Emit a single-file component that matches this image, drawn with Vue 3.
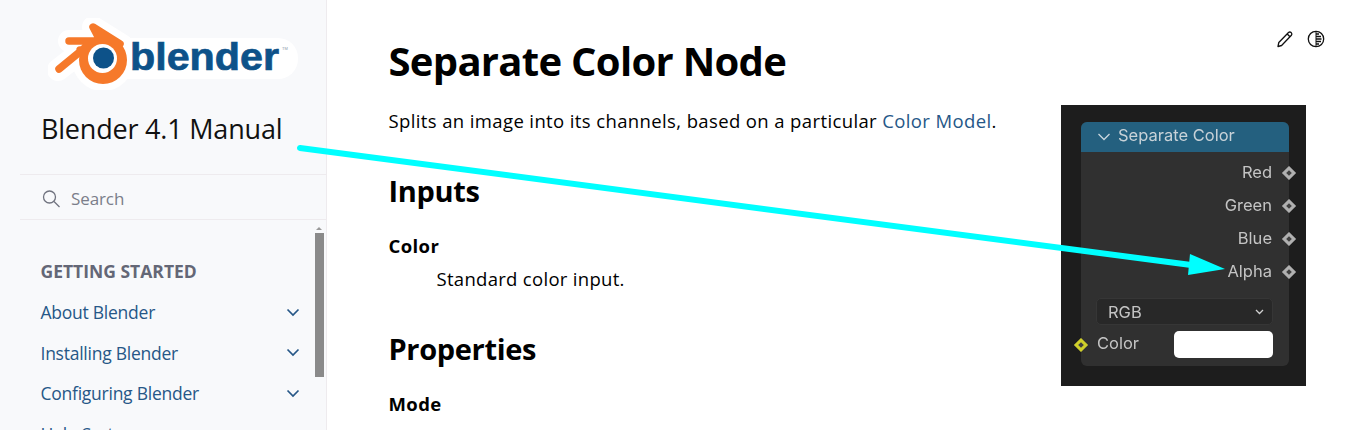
<script setup>
const navItems = ['About Blender', 'Installing Blender', 'Configuring Blender', 'Help System']
const outputs = ['Red', 'Green', 'Blue', 'Alpha']
</script>

<template>
  <div class="page">
    <aside class="sidebar">
      <svg class="logo" width="250" height="72" viewBox="48 18 250 72">
        <g fill="none" stroke="#fff" stroke-linecap="round" stroke-linejoin="round">
          <path d="M93 27 L122 45 M69 41 H105 M58 70 L90 45" stroke-width="22" />
          <circle cx="103" cy="60" r="31" fill="#fff" stroke="none" />
          <rect x="108" y="38" width="190" height="41" rx="20" fill="#fff" stroke="none" />
        </g>
        <circle cx="103" cy="60" r="24" fill="#f6792a" />
        <path d="M93 27 L120 44 L105 50 Z M69 41 H103 V50 H80 M59 69 L87 46" fill="none" stroke="#f6792a" stroke-width="7.5" stroke-linecap="round" stroke-linejoin="round" />
        <circle cx="102.5" cy="58.5" r="14.5" fill="#fff" />
        <circle cx="103.5" cy="58" r="10.5" fill="#0d5289" />
        <text class="logo-word" x="130" y="70" textLength="149" lengthAdjust="spacingAndGlyphs">blender</text>
        <text class="logo-tm" x="282" y="50">TM</text>
      </svg>
      <div class="brand">Blender 4.1 Manual</div>
      <div class="search">
        <svg width="18" height="18" viewBox="0 0 18 18" fill="none" stroke="#70737f" stroke-width="1.3">
          <circle cx="7.5" cy="7" r="6" />
          <path d="M12 11.5 L17.5 17" />
        </svg>
        <span>Search</span>
      </div>
      <nav class="nav">
        <div class="caption">GETTING STARTED</div>
        <a v-for="item in navItems" :key="item" class="nav-row">
          <span>{{ item }}</span>
          <svg width="14" height="9" viewBox="0 0 14 9" fill="none" stroke="#265787" stroke-width="1.7">
            <path d="M1.5 1.5 L7 7 L12.5 1.5" />
          </svg>
        </a>
      </nav>
      <div class="scroll-arrow"></div>
      <div class="scroll-thumb"></div>
    </aside>

    <main class="main">
      <div class="icons">
        <svg width="18" height="18" viewBox="0 0 18 18" fill="none" stroke="#111" stroke-width="1.3" stroke-linejoin="round">
          <path d="M2 16.5 L2.8 12.5 L12.5 2.5 Q13.8 1.4 15.2 2.6 Q16.5 4 15.4 5.3 L5.6 15.5 Z" />
          <path d="M11.2 4 L14 6.8" />
        </svg>
        <svg width="18" height="18" viewBox="0 0 18 18" fill="none" stroke="#111" stroke-width="1.3">
          <circle cx="9" cy="9" r="7.7" />
          <path d="M9 1.3 V16.7" stroke-width="1" />
          <path d="M9 4 H12 M9 6.5 H14 M9 9 H14.5 M9 11.5 H14 M9 14 H12" />
        </svg>
      </div>

      <div class="figure">
        <div class="node">
          <div class="node-head">
            <svg width="14" height="8" viewBox="0 0 14 8" fill="none" stroke="#c9d6de" stroke-width="1.3">
              <path d="M1.5 1 L7 6.5 L12.5 1" />
            </svg>
            <span>Separate Color</span>
          </div>
          <div class="node-outputs">
            <div v-for="o in outputs" :key="o" class="output">
              {{ o }}
              <i class="socket socket-right"></i>
            </div>
          </div>
          <div class="select">
            <span>RGB</span>
            <svg width="9" height="6" viewBox="0 0 9 6" fill="none" stroke="#d0d0d0" stroke-width="1.3">
              <path d="M1 1 L4.5 4.5 L8 1" />
            </svg>
          </div>
          <div class="color-row">
            <i class="socket socket-left"></i>
            <span class="color-label">Color</span>
            <div class="swatch"></div>
          </div>
        </div>
      </div>

      <h1>Separate Color Node</h1>
      <p class="lead">Splits an image into its channels, based on a particular <a>Color Model</a>.</p>
      <h2>Inputs</h2>
      <dl>
        <dt>Color</dt>
        <dd>Standard color input.</dd>
      </dl>
      <h2 class="h2-second">Properties</h2>
      <dl>
        <dt>Mode</dt>
        <dd>The color model to output.</dd>
      </dl>
    </main>

    <svg class="arrow" width="1349" height="430" viewBox="0 0 1349 430">
      <path d="M300 148 L1195 265.5" stroke="#00ffff" stroke-width="6" stroke-linecap="round" fill="none" />
      <path d="M1190 254 L1225 269 L1188 275 Z" fill="#00ffff" />
    </svg>
  </div>
</template>

<style>
html, body { margin: 0; background: #fff; }
</style>

<style scoped>
.page {
  position: relative;
  display: flex;
  width: 1349px;
  height: 430px;
  overflow: hidden;
  font-family: "Open Sans", "Noto Sans", sans-serif;
  color: #000;
}
.sidebar {
  position: relative;
  flex: 0 0 326px;
  box-sizing: content-box;
  height: 430px;
  overflow: hidden;
  background: #f8f9fb;
  border-right: 1px solid #eeebee;
}
.logo { display: block; margin: 18px 0 0 48px; }
.logo-word {
  font-family: "Liberation Sans", sans-serif;
  font-weight: 700;
  font-size: 38px;
  fill: #0d5289;
  stroke: #0d5289;
  stroke-width: 0.7px;
}
.logo-tm {
  font-family: "Liberation Sans", sans-serif;
  font-size: 4px;
  fill: #8a99a8;
}
.brand {
  margin: 19px 0 0 41px;
  height: 65px;
  line-height: 40px;
  font-size: 27px;
  letter-spacing: -0.2px;
  color: #111;
  white-space: nowrap;
}
.search {
  display: flex;
  align-items: center;
  gap: 12px;
  box-sizing: content-box;
  margin-left: 20px;
  padding: 3px 0 0 22px;
  height: 41px;
  border-top: 1px solid #eeebee;
  border-bottom: 1px solid #eeebee;
  color: #7b7e8a;
  font-size: 17px;
  letter-spacing: -0.1px;
}
.search span { margin-left: -1px; }
.nav { padding: 39px 0 0 40.5px; }
.caption {
  font-size: 17.5px;
  font-weight: 700;
  line-height: 24px;
  color: #646776;
  margin-bottom: 9px;
}
.nav-row {
  display: flex;
  align-items: center;
  justify-content: space-between;
  width: 259.5px;
  height: 40.5px;
  font-size: 17.5px;
  letter-spacing: -0.25px;
  color: #265787;
}
.scroll-arrow {
  position: absolute;
  left: 316px;
  top: 227px;
  border-left: 3px solid transparent;
  border-right: 3px solid transparent;
  border-bottom: 3px solid #9a9a9a;
}
.scroll-thumb {
  position: absolute;
  left: 315px;
  top: 233px;
  width: 9px;
  height: 144px;
  background: #8a8a8a;
}

.main {
  flex: 1;
  box-sizing: border-box;
  padding: 0 43px 0 61.5px;
  min-width: 0;
}
.icons {
  float: right;
  display: flex;
  gap: 13px;
  margin: 30px -19px 0 0;
}
.figure {
  float: right;
  clear: right;
  box-sizing: border-box;
  width: 245px;
  height: 281px;
  margin: 57px 0 0 30px;
  padding: 17px 17px 0 20px;
  background: #1d1d1d;
  font-family: Inter, "Open Sans", sans-serif;
  font-size: 16.5px;
  color: #c4c4c4;
  filter: blur(0.35px);
}
.node {
  box-sizing: border-box;
  width: 208px;
  height: 244px;
  border-radius: 6px;
  background: #303030;
}
.node-head {
  display: flex;
  align-items: center;
  gap: 7px;
  height: 29px;
  padding: 0 0 1px 16px;
  line-height: 24px;
  background: #24607f;
  border-radius: 6px 6px 0 0;
  color: #c8d2d8;
}
.node-head span { margin-top: -3px; }
.node-outputs { padding-top: 4px; }
.output {
  position: relative;
  height: 33px;
  line-height: 33px;
  text-align: right;
  padding-right: 17px;
}
.socket {
  position: absolute;
  top: 50%;
  width: 10px;
  height: 10px;
  margin-top: -5px;
  box-sizing: border-box;
  transform: rotate(45deg);
  border: 3.5px solid #b0b0b0;
  background: #404040;
}
.socket-right { right: -5px; }
.socket-left { left: -5px; border-color: #d0d02a; }
.select {
  display: flex;
  align-items: center;
  justify-content: space-between;
  box-sizing: border-box;
  width: 177px;
  height: 27px;
  margin: 10px 0 0 15px;
  padding: 0 8px 0 11px;
  border-radius: 5px;
  background: #282828;
  border: 1px solid #363636;
}
.color-row {
  position: relative;
  display: flex;
  align-items: center;
  justify-content: space-between;
  width: 177px;
  height: 27px;
  margin: 6px 0 0 15px;
}
.color-row .socket-left { left: -20px; }
.color-label { margin: -3px 0 0 1px; }
.swatch {
  width: 99px;
  height: 27px;
  border-radius: 5px;
  background: #fff;
}

h1 {
  margin: 0;
  padding-top: 34px;
  font-size: 40px;
  line-height: 54px;
  font-weight: 700;
  letter-spacing: -0.7px;
}
.lead {
  margin: 19px 0 0;
  font-size: 18.5px;
  line-height: 28px;
  letter-spacing: 0.38px;
}
.lead a { color: #265787; }
h2 {
  margin: 36px 0 0;
  font-size: 29px;
  line-height: 40px;
  font-weight: 700;
  letter-spacing: -0.35px;
}
.h2-second { margin-top: 36px; }
dl { margin: 21px 0 0; }
dt {
  font-size: 18.5px;
  line-height: 28px;
  font-weight: 700;
  letter-spacing: 0.4px;
}
dd {
  margin: 5px 0 0 48px;
  font-size: 18.5px;
  line-height: 28px;
  letter-spacing: 0.3px;
}
.arrow {
  position: absolute;
  left: 0;
  top: 0;
  pointer-events: none;
}
</style>
